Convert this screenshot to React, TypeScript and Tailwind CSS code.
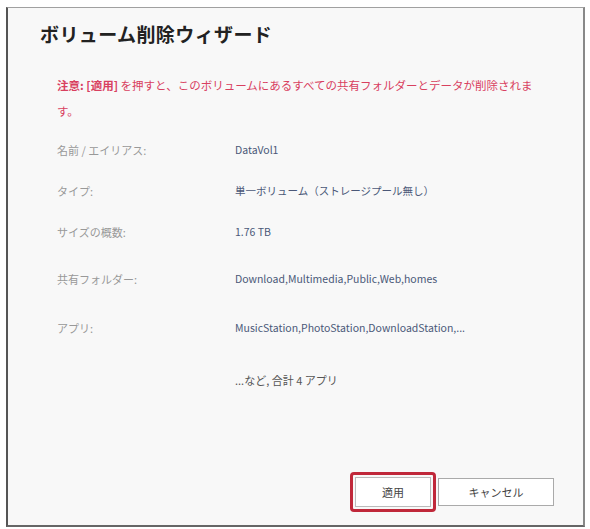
const rows = [
  { label: "名前 / エイリアス:", value: "DataVol1", h: "h-[41px]" },
  { label: "タイプ:", value: "単一ボリューム（ストレージプール無し）", h: "h-[41px]" },
  { label: "サイズの概数:", value: "1.76 TB", h: "h-[47px]" },
  { label: "共有フォルダー:", value: "Download,Multimedia,Public,Web,homes", h: "h-[49px]" },
  { label: "アプリ:", value: "MusicStation,PhotoStation,DownloadStation,...", h: "h-[52px]" },
];

export default function App() {
  return (
    <main
      className="w-[590px] h-[529px] bg-white pt-[7px] pl-[6px]"
      style={{ fontFamily: '"Noto Sans CJK JP", "Noto Sans", sans-serif' }}
    >
      <div className="flex flex-col w-[579px] h-[520px] bg-[#f8f8f8] border-t border-l-2 border-r-2 border-b-2 border-t-[#a0a0a0] border-l-[#555] border-r-[#888] border-b-[#666]">
        <h2 className="pt-[12px] pl-[32px] text-[19px] leading-[28px] font-bold text-[#222] tracking-[0.4px]">
          ボリューム削除ウィザード
        </h2>

        <p className="mt-[24px] pl-[49px] pr-[44px] text-[11.5px] leading-[26px] text-[#d8405f]">
          <span className="font-bold">注意: [適用]</span> を押すと、このボリュームにあるすべての共有フォルダーとデータが削除されます。
        </p>

        <div className="mt-[16px] pl-[49px]">
          {rows.map((r) => (
            <div key={r.label} className={`flex ${r.h}`}>
              <span className="w-[178px] text-[11px] leading-[20px] text-[#999]">{r.label}</span>
              <span className="text-[10.5px] leading-[20px] text-[#4b5878]">{r.value}</span>
            </div>
          ))}
          <div className="flex h-[20px]">
            <span className="w-[178px]" />
            <span className="text-[11px] leading-[20px] text-[#555]">...など, 合計 4 アプリ</span>
          </div>
        </div>

        <div className="mt-auto flex justify-end items-center pr-[29px] pb-[13px]">
          <div className="rounded-[4px] border-[3px] border-[#c0283a] p-[2px]">
            <button className="w-[76px] h-[30px] bg-white border border-[#bbb] text-[11px] text-[#444]">
              適用
            </button>
          </div>
          <button className="ml-[2px] w-[116px] h-[28px] bg-white border border-[#aaa] text-[11px] text-[#444]">
            キャンセル
          </button>
        </div>
      </div>
    </main>
  );
}
